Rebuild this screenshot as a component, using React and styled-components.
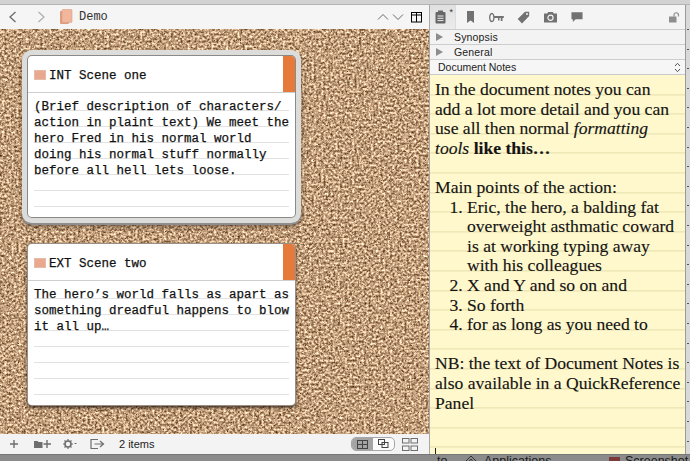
import React from 'react';
import styled, { createGlobalStyle } from 'styled-components';

const Global = createGlobalStyle`
  html, body { margin: 0; padding: 0; background: #6f6f6f; }
  * { box-sizing: border-box; }
`;

const Screen = styled.div`
  width: 690px; height: 461px; overflow: hidden; position: relative;
  display: flex; flex-direction: column;
  background: #7a7a7a;
  font-family: "Liberation Sans", Arial, sans-serif;
`;
const TopStrip = styled.div`
  height: 5px; flex: none;
  background: #d2d2d2;
  border-bottom: 1px solid #b4b4b4;
`;
const Window = styled.div`
  display: flex; flex: none; height: 449px;
`;
const LeftPane = styled.div`
  width: 430px; flex: none; display: flex; flex-direction: column;
  border-right: 1px solid #a8a8a8;
`;
const Toolbar = styled.div`
  height: 24px; flex: none; display: flex; align-items: center;
  background: #f5f5f5; padding: 0 7px 0 6px;
`;
const NavButton = styled.button`
  border: 0; background: none; padding: 0; width: 14px; height: 16px; margin-right: ${p => p.$gap || 0}px;
  display: flex; align-items: center; justify-content: center;
  color: ${p => p.$dim ? '#b0b0b0' : '#6a6a6a'};
`;
const Title = styled.span`
  font-family: "Liberation Mono", monospace; font-size: 12px; color: #333; margin-left: 6px; flex: 1;
`;
const Cork = styled.div`
  flex: 1; position: relative; overflow: hidden; background: #b58a66;
  padding: 27px 0 0 28px; display: flex; flex-direction: column; gap: 27px;
`;
const Texture = styled.svg`
  position: absolute; inset: 0; width: 100%; height: 100%;
`;
const Card = styled.div`
  position: relative; width: 267px; height: 161px; background: #fff; border-radius: 4px;
  display: flex; flex-direction: column; flex: none;
  box-shadow: ${p => p.$selected
    ? '0 0 0 1px #8a8a8a, 0 0 0 6px #dcdcda, 0 2px 0 6px #8d8d8d, 0 4px 5px 6px rgba(60,40,25,.55)'
    : '0 0 0 1px #9a8f86, 0 2px 3px 1px rgba(40,25,15,.75)'};
`;
const CardHead = styled.div`
  height: 37px; flex: none; display: flex; align-items: center; padding: 3px 0 0 6px;
  border-bottom: 1px solid #cfcfcf; position: relative;
  font-family: "Liberation Mono", monospace; font-size: 12.5px; color: #111;
  -webkit-text-stroke: 0.25px #111;
`;
const Swatch = styled.span`
  width: 12px; height: 10px; background: #eaa98f; border: 1px solid #e4bcaa; margin-right: 3px; flex: none; margin-top: -1px;
`;
const Label = styled.span`
  position: absolute; right: 0; top: 0; bottom: 0; width: 12px; background: #e67a3a; border-top-right-radius: 4px;
`;
const CardBody = styled.div`
  flex: 1; padding: 6px 6px 0 6px; overflow: hidden; white-space: nowrap;
  font-family: "Liberation Mono", monospace; font-size: 12.5px; line-height: 16px; color: #111;
  -webkit-text-stroke: 0.25px #111;
  background-image: repeating-linear-gradient(to bottom, transparent 0 15px, #e2e2e2 15px 16px);
  background-size: 255px 100%; background-position: 6px 2px; background-repeat: no-repeat;
`;
const BottomBar = styled.div`
  height: 20px; flex: none; display: flex; align-items: center; background: #f3f3f3;
  padding: 0 11px 0 8px; color: #6e6e6e;
`;
const Gap = styled.span`
  flex: none; width: ${p => p.$w}px;
`;
const ItemCount = styled.span`
  font-size: 11px; color: #222; margin-left: 14px; flex: 1;
`;
const Segment = styled.div`
  display: flex; width: 44px; height: 14px; border: 1px solid #a6a6a6; border-radius: 5px; overflow: hidden; margin-right: 7px;
  background: #fafafa;
`;
const SegCell = styled.div`
  flex: 1; display: flex; align-items: center; justify-content: center;
  background: ${p => p.$on ? '#a4a4a4' : 'transparent'}; color: #444;
`;
const RightPane = styled.div`
  width: 256px; flex: none; display: flex; flex-direction: column;
  border-right: 1px solid #9a9a9a;
`;
const InspectorBar = styled.div`
  height: 24px; flex: none; display: flex; align-items: center; background: #f4f4f4; padding-right: 5px; color: #727272;
`;
const TabActive = styled.div`
  width: 26px; height: 24px; display: flex; align-items: center; justify-content: flex-start; padding-left: 5px;
  background: linear-gradient(#e0e0e0, #ececec); border-right: 1px solid #dcdcdc; color: #555; position: relative; margin-right: 1px;
`;
const Star = styled.span`
  position: absolute; right: 2px; top: 3px; font-size: 9px; line-height: 9px; color: #333;
`;
const Tab = styled.div`
  width: 26.6px; flex: none; display: flex; justify-content: center; align-items: center;
`;
const Spacer = styled.div`flex: 1;`;
const Disclosure = styled.div`
  height: 15px; flex: none; display: flex; align-items: center; background: #f3f3f3;
  border-top: 1px solid #cdcdcd; font-size: 10.5px; color: #222; padding-left: 6px; letter-spacing: .15px;
`;
const Arrow = styled.span`
  width: 0; height: 0; border-left: 7px solid #8d8d8d; border-top: 4px solid transparent; border-bottom: 4px solid transparent;
  margin-right: 11px;
`;
const NotesHead = styled(Disclosure)`
  height: 16px; padding: 0 4px 0 8px; justify-content: space-between; background: #f6f6f6;
  border-bottom: 1px solid #c9c9c9; letter-spacing: 0;
`;
const Notes = styled.div`
  flex: 1; overflow: hidden; padding: 5px 0 0 5px;
  background-color: #fff8cd;
  background-image: repeating-linear-gradient(to bottom, transparent 0 18.6px, #e4dda9 18.6px 19.6px);
  background-position: 0 0.4px;
  font-family: "Liberation Serif", serif; font-size: 17.6px; line-height: 19.6px; color: #141414;
  -webkit-text-stroke: 0.15px #141414;
  position: relative;
`;
const Para = styled.p`margin: 0 0 19.6px 0; white-space: pre-line;`;
const List = styled.ol`margin: 0 0 19.6px 0; padding: 0 0 0 32px;`;
const Cursor = styled.span`
  position: absolute; left: 5px; bottom: 0; width: 1px; height: 6px; background: #222;
`;
const Side = styled.div`
  flex: 1; background-color: #d9d9d9;
  background-image: repeating-linear-gradient(to bottom, transparent 0 18px, #555 18px 19px, transparent 19px 19.6px);
  background-position: 1px 6px; background-size: 2px 100%; background-repeat: no-repeat;
`;
const Dock = styled.div`
  flex: 1; background: #8b8b8b; border-top: 1px solid #777;
  font-size: 12.5px; color: #1a1a1a; line-height: 12px; position: relative;
`;
const DockText = styled.span`
  position: absolute; left: ${p => p.$l}px; top: 0; white-space: nowrap;
`;
const DockIcon = styled.svg`
  position: absolute; left: ${p => p.$l}px; top: 0;
`;

const Chevron = ({ d }) => (
  <svg width="14" height="14" viewBox="0 0 14 14" fill="none" stroke="currentColor" strokeWidth="1.3"><path d={d} /></svg>
);
const Mini = ({ w = 14, h = 14, children }) => (
  <svg width={w} height={h} viewBox={`0 0 ${w} ${h}`} fill="none" stroke="currentColor" strokeWidth="1">{children}</svg>
);

export default function App() {
  return (
    <Screen>
      <Global />
      <TopStrip />
      <Window>
        <LeftPane>
          <Toolbar>
            <NavButton $gap={14}><Chevron d="M9.5 2 L4 7 L9.5 12" /></NavButton>
            <NavButton $dim $gap={12}><Chevron d="M4.5 2 L10 7 L4.5 12" /></NavButton>
            <svg width="13" height="16" viewBox="0 0 13 16">
              <rect x="0" y="2" width="9" height="13" rx="1" fill="#dc9e80" />
              <rect x="2" y="0.5" width="10" height="13" rx="1" fill="#f1b79c" stroke="#dd9f82" strokeWidth=".6" />
            </svg>
            <Title>Demo</Title>
            <NavButton $gap={1}><Mini w={12} h={10}><path d="M1 7.5 L6 2.5 L11 7.5" /></Mini></NavButton>
            <NavButton $gap={6}><Mini w={12} h={10}><path d="M1 2.5 L6 7.5 L11 2.5" /></Mini></NavButton>
            <Mini w={11} h={11}><rect x=".5" y=".5" width="10" height="9.5" /><path d="M.5 3H10.5M5.5 .5V10" /></Mini>
          </Toolbar>
          <Cork>
            <Texture aria-hidden="true">
              <filter id="cork" x="0" y="0" width="100%" height="100%" colorInterpolationFilters="sRGB">
                <feTurbulence type="fractalNoise" baseFrequency="0.42" numOctaves="2" seed="11" result="grain" />
                <feColorMatrix in="grain" type="matrix" values="1.25 0 0 0 0.14  1.2 0 0 0 0.03  1.15 0 0 0 -0.08  0 0 0 0 1" result="base" />
                <feTurbulence type="fractalNoise" baseFrequency="0.55" numOctaves="1" seed="4" result="speckNoise" />
                <feColorMatrix in="speckNoise" type="matrix" values="0 0 0 0 0.36  0 0 0 0 0.22  0 0 0 0 0.13  9 0 0 0 -6" result="specks" />
                <feMerge result="merged"><feMergeNode in="base" /><feMergeNode in="specks" /></feMerge>
                <feGaussianBlur in="merged" stdDeviation="0.4" />
              </filter>
              <rect width="100%" height="100%" filter="url(#cork)" />
            </Texture>
            <Card $selected>
              <CardHead><Swatch />INT Scene one<Label /></CardHead>
              <CardBody>
                (Brief description of characters/<br />
                action in plaint text) We meet the<br />
                hero Fred in his normal world<br />
                doing his normal stuff normally<br />
                before all hell lets loose.
              </CardBody>
            </Card>
            <Card>
              <CardHead><Swatch />EXT Scene two<Label /></CardHead>
              <CardBody>
                The hero’s world falls as apart as<br />
                something dreadful happens to blow<br />
                it all up…
              </CardBody>
            </Card>
          </Cork>
          <BottomBar>
            <Mini w={12} h={12}><path d="M6 2V10M2 6H10" strokeWidth="1.4" /></Mini>
            <Gap $w={13} />
            <Mini w={20} h={12}>
              <path d="M1 3H4.5L5.5 4H9.5V10H1Z" fill="currentColor" stroke="none" />
              <path d="M14 2V10M10.5 6H18" strokeWidth="1.4" />
            </Mini>
            <Gap $w={9} />
            <Mini w={15} h={12}>
              <circle cx="6" cy="6" r="3" strokeWidth="1.6" />
              <path d="M6 1V3M6 9V11M1 6H3M9 6H11M2.5 2.5L4 4M8 8L9.5 9.5M2.5 9.5L4 8M8 4L9.5 2.5" strokeWidth="1.2" />
              <path d="M12.5 5.5H14.5" />
            </Mini>
            <Gap $w={13} />
            <Mini w={15} h={12}>
              <path d="M8 1.5H1V10.5H8" strokeWidth="1.2" />
              <path d="M4.5 6H13M10 3L13.5 6L10 9" strokeWidth="1.2" />
            </Mini>
            <ItemCount>2 items</ItemCount>
            <Segment>
              <SegCell $on><Mini w={11} h={9}><rect x=".5" y=".5" width="10" height="8" /><path d="M.5 4.5H10.5M5.5 .5V8.5" /></Mini></SegCell>
              <SegCell><Mini w={11} h={10}><rect x=".5" y=".5" width="6" height="5" /><rect x="4" y="3.5" width="6" height="5" /></Mini></SegCell>
            </Segment>
            <Mini w={16} h={13}>
              <rect x=".5" y=".5" width="6.5" height="4.5" /><rect x="9" y=".5" width="6.5" height="4.5" />
              <rect x=".5" y="8" width="6.5" height="4.5" /><rect x="9" y="8" width="6.5" height="4.5" />
            </Mini>
          </BottomBar>
        </LeftPane>
        <RightPane>
          <InspectorBar>
            <TabActive>
              <svg width="11" height="14" viewBox="0 0 11 14">
                <rect x="0.5" y="2" width="10" height="11.5" rx="1" fill="#666" />
                <rect x="3" y="0.5" width="5" height="3" fill="#666" />
                <path d="M2.5 6H8.5M2.5 8.3H8.5M2.5 10.6H8.5" stroke="#eee" strokeWidth="1" />
              </svg>
              <Star>*</Star>
            </TabActive>
            <Tab>
              <svg width="9" height="14" viewBox="0 0 9 14"><path d="M1 1H8V13L4.5 10.5L1 13Z" fill="currentColor" /></svg>
            </Tab>
            <Tab>
              <svg width="15" height="11" viewBox="0 0 15 11" fill="none" stroke="currentColor">
                <ellipse cx="2.8" cy="5.5" rx="2.1" ry="4" strokeWidth="1.3" />
                <path d="M5 4H14.8V6H13.5V9H11.8V6H10.5V8.5H9V6H5Z" fill="currentColor" stroke="none" />
              </svg>
            </Tab>
            <Tab>
              <svg width="13" height="13" viewBox="0 0 13 13"><path d="M8 .8H12.2V5L5 12.4L.7 8Z" fill="currentColor" /><circle cx="10" cy="3" r="1" fill="#f4f4f4" /></svg>
            </Tab>
            <Tab>
              <svg width="13" height="12" viewBox="0 0 14 12">
                <path d="M0 2.2H3.5L4.5 .5H9.5L10.5 2.2H14V12H0Z" fill="currentColor" />
                <circle cx="7" cy="6.8" r="2.8" fill="none" stroke="#f4f4f4" strokeWidth="1.2" />
              </svg>
            </Tab>
            <Tab>
              <svg width="12" height="12" viewBox="0 0 13 12"><path d="M.5 .8H12.5V8.5H5L2 11.5V8.5H.5Z" fill="currentColor" /></svg>
            </Tab>
            <Spacer />
            <svg width="11" height="11" viewBox="0 0 11 11">
              <rect x="0" y="4.5" width="7.5" height="6" fill="#8e8e8e" />
              <path d="M5 4.5V3A2 2 0 0 1 9.5 3V4.5" fill="none" stroke="#8e8e8e" strokeWidth="1.2" />
            </svg>
          </InspectorBar>
          <Disclosure><Arrow />Synopsis</Disclosure>
          <Disclosure><Arrow />General</Disclosure>
          <NotesHead>
            Document Notes
            <svg width="7" height="11" viewBox="0 0 7 11" fill="none" stroke="#555" strokeWidth="1"><path d="M1 4L3.5 1.3L6 4M1 7L3.5 9.7L6 7" /></svg>
          </NotesHead>
          <Notes>
            <Para>
              In the document notes you can{'\n'}add a lot more detail and you can{'\n'}use all then normal <em>formatting</em>{'\n'}<em>tools</em> <strong>like this…</strong>
            </Para>
            <div>Main points of the action:</div>
            <List>
              <li>Eric, the hero, a balding fat<br />overweight asthmatic coward<br />is at working typing away<br />with his colleagues</li>
              <li>X and Y and so on and</li>
              <li>So forth</li>
              <li>for as long as you need to</li>
            </List>
            <Para>NB: the text of Document Notes is{'\n'}also available in a QuickReference{'\n'}Panel</Para>
            <Cursor />
          </Notes>
        </RightPane>
        <Side />
      </Window>
      <Dock>
        <DockText $l={437}>to</DockText>
        <DockIcon $l={462} width="18" height="7" viewBox="0 0 18 7" fill="none" stroke="#333"><path d="M1 9L9 1L17 9M5 9L9 4L13 9" /></DockIcon>
        <DockText $l={484}>Applications</DockText>
        <DockIcon $l={609} width="11" height="7" viewBox="0 0 11 7"><rect x="0" y="2" width="11" height="5" fill="#7a3a3a" /></DockIcon>
        <DockText $l={625}>Screenshot…</DockText>
      </Dock>
    </Screen>
  );
}
